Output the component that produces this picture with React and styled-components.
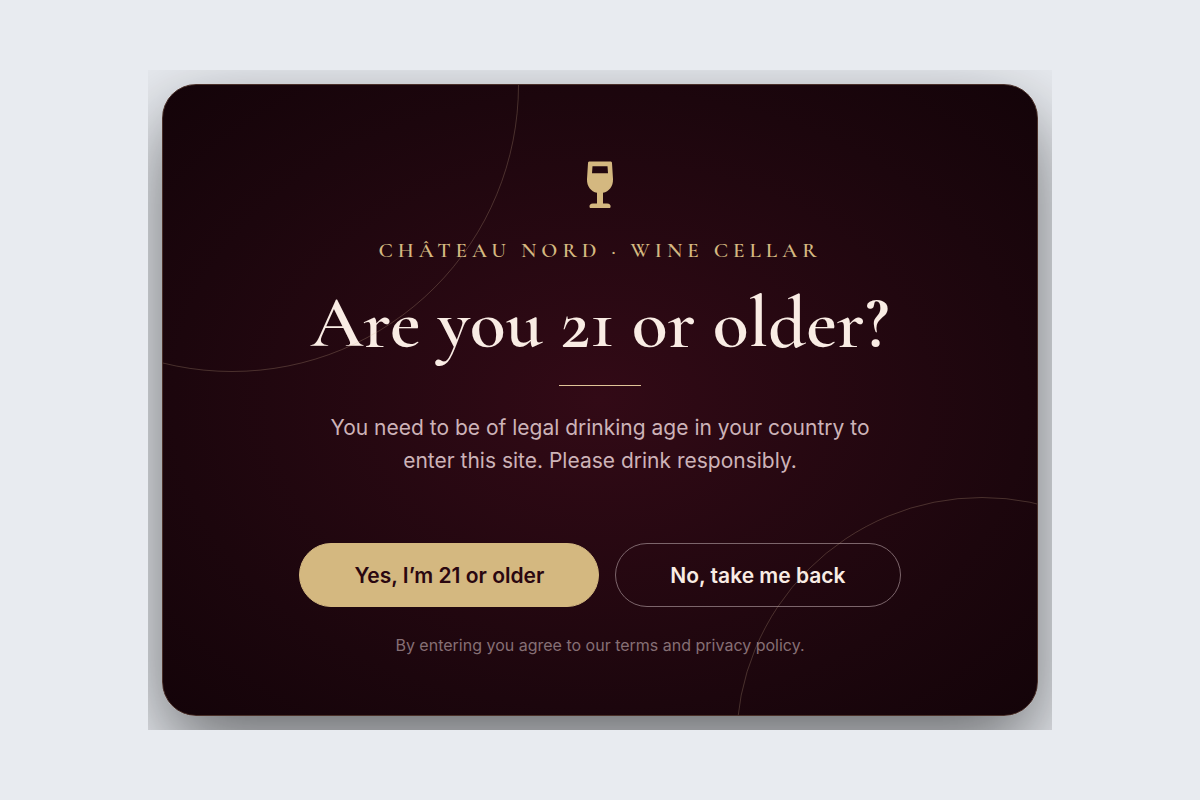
import React from 'react';
import styled, { createGlobalStyle } from 'styled-components';

const App = () => {
  return (
    <>
      <GlobalStyle />
      <Page>
        <Backdrop>
          <Card>
            <Ring className='top' />
            <Ring className='bottom' />
            <WineGlass />
            <Brand>CHÂTEAU NORD · WINE CELLAR</Brand>
            <Title>Are you 21 or older?</Title>
            <Divider />
            <Message>
              You need to be of legal drinking age in your country to enter
              this site. Please drink responsibly.
            </Message>
            <Actions>
              <Button type='button' $primary>
                Yes, I’m 21 or older
              </Button>
              <Button type='button'>No, take me back</Button>
            </Actions>
            <Terms>By entering you agree to our terms and privacy policy.</Terms>
          </Card>
        </Backdrop>
      </Page>
    </>
  );
};

const WineGlass = () => (
  <Glass viewBox='0 0 28 48' aria-hidden='true'>
    <path
      fillRule='evenodd'
      d='M3.6 0.5H24.4C25.4 0.5 25.9 1 26 2L27 18C27.3 25.5 23 30.5 17 31.8V42.6H21C23.8 42.6 24.6 44 24.6 45.5C24.6 46.5 24 47 23.2 47H5C4.1 47 3.5 46.5 3.5 45.5C3.5 44 4.4 42.6 7 42.6H11V31.8C5 30.5 0.7 25.5 1 18L2 2C2.1 1 2.6 0.5 3.6 0.5ZM6.5 5.2L6 12.3H22L21.5 5.2Z'
    />
  </Glass>
);

const GlobalStyle = createGlobalStyle`
  * {
    box-sizing: border-box;
  }
  body {
    margin: 0;
    background-color: #e8ebf0;
    font-family: Inter, 'Liberation Sans', sans-serif;
  }
`;
const Page = styled.main`
  display: flex;
  justify-content: center;
  align-items: center;
  min-height: 100vh;
  padding: 24px;
`;
const Backdrop = styled.div`
  width: 100%;
  max-width: 904px;
  padding: 14px;
  overflow: hidden;
`;
const Card = styled.section`
  position: relative;
  display: flex;
  flex-direction: column;
  align-items: center;
  padding: 76px 24px 58px;
  overflow: hidden;
  text-align: center;
  border: 1px solid #4a3029;
  border-radius: 34px;
  background: radial-gradient(
    ellipse 75% 75% at 50% 50%,
    #320a16 0%,
    #1c060d 65%,
    #120308 100%
  );
  box-shadow: 0 32px 80px rgba(0, 0, 0, 0.55);
`;
const Ring = styled.span`
  position: absolute;
  border: 1px solid rgba(212, 184, 148, 0.24);
  border-radius: 50%;
  pointer-events: none;
  &.top {
    width: 574px;
    height: 574px;
    top: -287px;
    left: -218px;
  }
  &.bottom {
    width: 492px;
    height: 492px;
    right: -191px;
    bottom: -274px;
  }
`;
const Glass = styled.svg`
  width: 28px;
  height: 48px;
  fill: #d4b880;
`;
const Brand = styled.p`
  margin: 28px 0 0;
  font-family: 'Cormorant Garamond', 'Liberation Serif', serif;
  font-size: 21px;
  font-weight: 600;
  line-height: 28px;
  letter-spacing: 5px;
  color: #d4b880;
`;
const Title = styled.h1`
  margin: 20px 0 0;
  font-family: 'Cormorant Garamond', 'Liberation Serif', serif;
  font-size: 74px;
  font-weight: 600;
  line-height: 76px;
  color: #f9ece4;
`;
const Divider = styled.hr`
  width: 82px;
  height: 1px;
  margin: 24px 0 25px;
  border: none;
  background-color: #e0c498;
`;
const Message = styled.p`
  max-width: 560px;
  margin: 0;
  font-size: 21px;
  line-height: 33px;
  color: #cdb3b8;
`;
const Actions = styled.div`
  display: flex;
  flex-wrap: wrap;
  justify-content: center;
  gap: 16px;
  margin-top: 66px;
`;
const Button = styled.button`
  height: 64px;
  padding: 0 54px;
  font-family: inherit;
  font-size: 21px;
  font-weight: 600;
  cursor: pointer;
  border: 1px solid ${({ $primary }) => ($primary ? '#d4b880' : '#7c656b')};
  border-radius: 32px;
  background-color: ${({ $primary }) => ($primary ? '#d4b880' : 'transparent')};
  color: ${({ $primary }) => ($primary ? '#2a0710' : '#f9ece4')};
`;
const Terms = styled.p`
  margin: 26px 0 0;
  font-size: 16px;
  line-height: 24px;
  color: #866f75;
`;

export default App;
